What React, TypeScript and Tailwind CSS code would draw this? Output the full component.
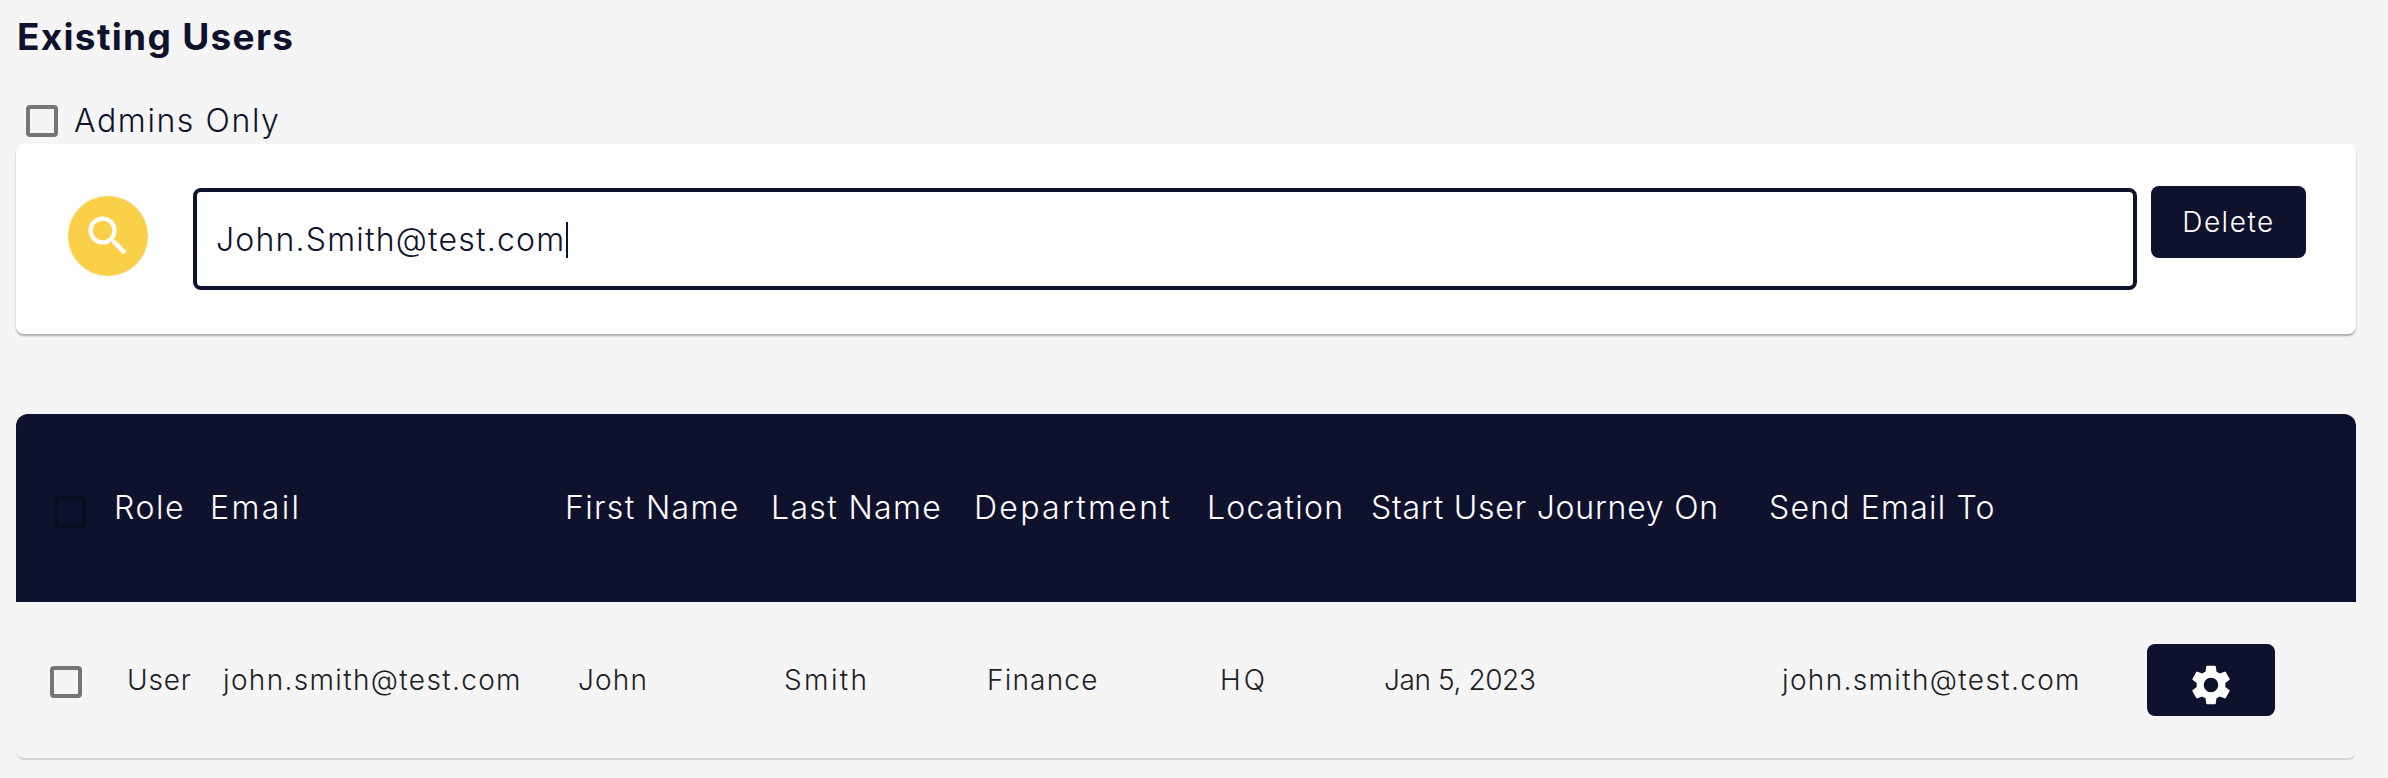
import { MdSearch, MdSettings } from "react-icons/md";

const GRID =
  "grid grid-cols-[98px_96px_355px_206px_203px_233px_164px_398px_378px_1fr] items-center";

const HEADERS = [
  { label: "Role", track: "tracking-[1.6px]" },
  { label: "Email", track: "tracking-[2.4px]" },
  { label: "First Name", track: "tracking-[1.35px]" },
  { label: "Last Name", track: "tracking-[1.35px]" },
  { label: "Department", track: "tracking-[2.3px]" },
  { label: "Location", track: "tracking-[1.2px]" },
  { label: "Start User Journey On", track: "tracking-[0.77px]" },
  { label: "Send Email To", track: "tracking-[1.2px]" },
];

const ROW = [
  { text: "User", track: "tracking-[0.8px]" },
  { text: "john.smith@test.com", track: "tracking-[1.35px]" },
  { text: "John", track: "tracking-[1.2px]" },
  { text: "Smith", track: "tracking-[2.4px]" },
  { text: "Finance", track: "tracking-[1.2px]" },
  { text: "HQ", track: "tracking-[3px]" },
  { text: "Jan 5, 2023", track: "tracking-[-0.4px]" },
  { text: "john.smith@test.com", track: "tracking-[1.35px]" },
];

export default function App() {
  return (
    <div className="min-h-screen bg-[#f5f5f5] pt-[16px] pr-8 pl-4 font-['Inter',sans-serif] text-[#0f122d]">
      {/* Title */}
      <h1 className="h-[42px] pl-px text-[37px] leading-[42px] font-bold tracking-[1.3px] whitespace-nowrap">
        Existing Users
      </h1>

      {/* Admin filter */}
      <label className="mt-[39px] flex h-[47px] items-center pl-[10px]">
        <span className="block h-8 w-8 rounded-[4px] border-4 border-[#757575]" />
        <span className="ml-4 text-[32px] leading-none font-light tracking-[1.6px]">Admins Only</span>
      </label>

      {/* Search card */}
      <div className="flex h-[190px] items-start rounded-lg bg-white pr-[50px] pl-[52px] shadow-[0_2px_2px_rgba(0,0,0,0.3)]">
        <div className="mt-[52px] flex h-20 w-20 shrink-0 items-center justify-center rounded-full bg-[#f9d048] text-white">
          <MdSearch size={52} />
        </div>
        <div className="mt-[44px] ml-[45px] flex h-[102px] flex-1 items-center rounded-lg border-4 border-[#0f122d] pt-[2px] pl-[19px] text-[32px] font-light tracking-[1.2px]">
          <span className="whitespace-nowrap">John.Smith@test.com</span>
          <span className="ml-px block h-9 w-0.5 bg-[#0f122d]" />
        </div>
        <button className="mt-[42px] ml-[14px] h-[72px] w-[155px] shrink-0 rounded-lg bg-[#0f122d] text-[28px] font-light tracking-[1.5px] text-white">
          Delete
        </button>
      </div>

      {/* Table */}
      <div className="mt-[80px]">
        <div className={`${GRID} h-[188px] rounded-t-xl bg-[#0f122d] text-[32px] font-light text-white`}>
          <div className="pt-2 pl-[38px]">
            <span className="block h-8 w-8 rounded-[4px] border-4 border-[#0a0c1f]" />
          </div>
          {HEADERS.map((h) => (
            <div key={h.label} className={`${h.track} whitespace-nowrap`}>
              {h.label}
            </div>
          ))}
        </div>
        <div className={`${GRID} h-[158px] rounded-b-lg border-b-2 border-[#d5d5d5] text-[28px] font-light text-[#1d1d26]`}>
          <div className="pt-1 pl-[34px]">
            <span className="block h-8 w-8 rounded-[4px] border-4 border-[#757575]" />
          </div>
          {ROW.map((c, i) => (
            <div key={i} className={`${c.track} pl-[13px] whitespace-nowrap`}>
              {c.text}
            </div>
          ))}
          <div>
            <button className="flex h-[72px] w-32 items-center justify-center rounded-lg bg-[#0f122d] pt-[10px] text-white">
              <MdSettings size={48} />
            </button>
          </div>
        </div>
      </div>
    </div>
  );
}
